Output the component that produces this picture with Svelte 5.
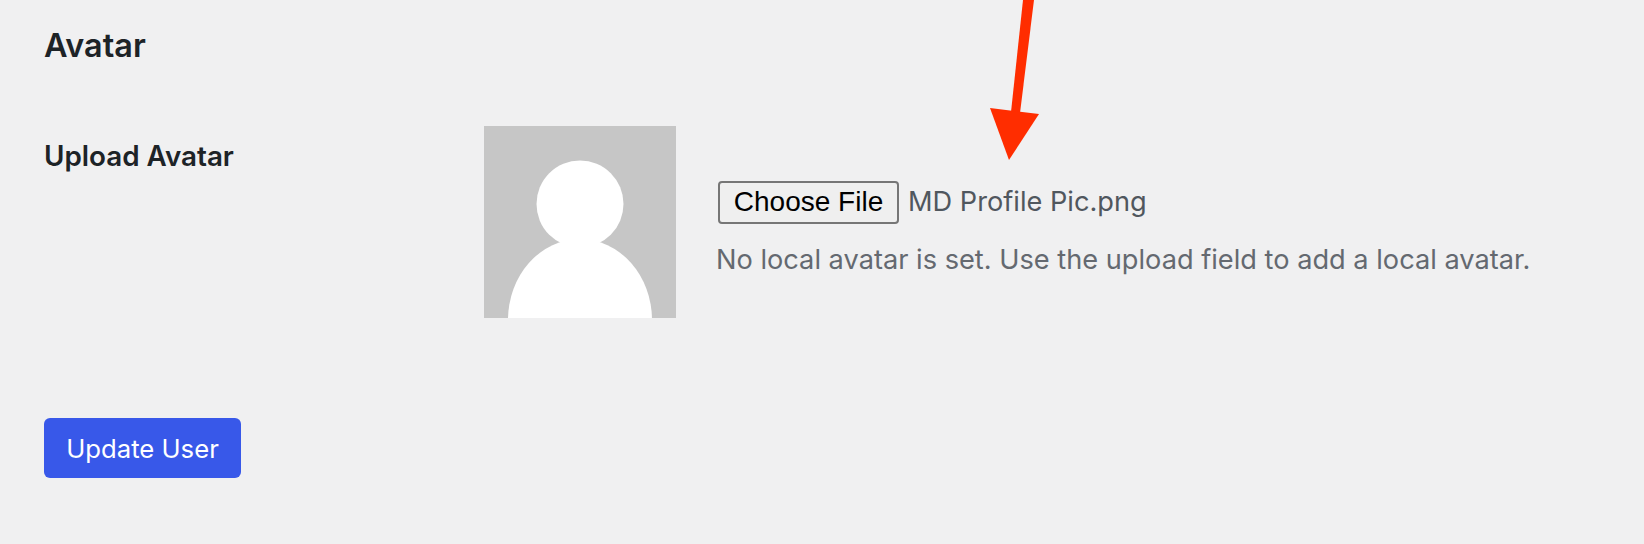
<script lang="ts">
  const fileName = 'MD Profile Pic.png';
</script>

<div class="page">
  <h2 class="section-title">Avatar</h2>

  <div class="field-row">
    <div class="field-label">Upload Avatar</div>
    <svg class="avatar" viewBox="0 0 192 192" aria-hidden="true">
      <rect width="192" height="192" fill="#c6c6c6" />
      <ellipse cx="96" cy="194" rx="72" ry="81" fill="#fff" />
      <circle cx="96" cy="78" r="43.5" fill="#fff" />
    </svg>
    <div class="field-control">
      <div class="file-picker">
        <button class="file-button" type="button">Choose File</button>
        <span class="file-name">{fileName}</span>
      </div>
      <p class="description">No local avatar is set. Use the upload field to add a local avatar.</p>
    </div>
  </div>

  <button class="submit" type="button">Update User</button>

  <!-- annotation drawn over the screenshot -->
  <svg class="arrow" viewBox="0 0 80 170" aria-hidden="true">
    <polygon points="43,0 54,0 40,113 31,112" fill="#ff2d00" />
    <polygon points="10,108 59,114 29,160" fill="#ff2d00" />
  </svg>
</div>

<style>
  :global(body) {
    margin: 0;
    background: #f0f0f1;
  }

  .page {
    position: relative;
    box-sizing: border-box;
    width: 1644px;
    height: 544px;
    padding: 27px 0 0 44px;
    overflow: hidden;
    background: #f0f0f1;
    color: #1d2327;
    font-family: Inter, "Liberation Sans", sans-serif;
  }

  .section-title {
    margin: 0;
    font-size: 32.4px;
    line-height: 38px;
    font-weight: 600;
  }

  .field-row {
    display: flex;
    margin-top: 61px;
    height: 192px;
  }

  .field-label {
    width: 440px;
    padding-top: 14px;
    font-size: 27.8px;
    line-height: 32px;
    font-weight: 600;
  }

  .avatar {
    width: 192px;
    height: 192px;
    flex: none;
  }

  .field-control {
    margin-left: 40px;
    padding-top: 55px;
  }

  .file-picker {
    display: flex;
    align-items: center;
    gap: 9px;
    margin-left: 2px;
    height: 43px;
  }

  .file-button {
    box-sizing: border-box;
    width: 181px;
    height: 43px;
    padding: 0 0 2px;
    border: 2px solid #767676;
    border-radius: 4px;
    background: #efefef;
    color: #000;
    font-family: "Liberation Sans", Arial, sans-serif;
    font-size: 28px;
  }

  .file-name {
    margin-bottom: 3px;
    color: #50575e;
    font-size: 27.2px;
  }

  .description {
    margin: 20px 0 0;
    color: #646970;
    font-size: 27.2px;
    line-height: 32px;
  }

  .submit {
    display: block;
    box-sizing: border-box;
    width: 197px;
    height: 60px;
    margin-top: 100px;
    padding: 0;
    border: 0;
    border-radius: 6px;
    background: #3858e9;
    color: #fff;
    font-family: Inter, "Liberation Sans", sans-serif;
    font-size: 25.7px;
  }

  .arrow {
    position: absolute;
    left: 980px;
    top: 0;
    width: 80px;
    height: 170px;
  }
</style>
